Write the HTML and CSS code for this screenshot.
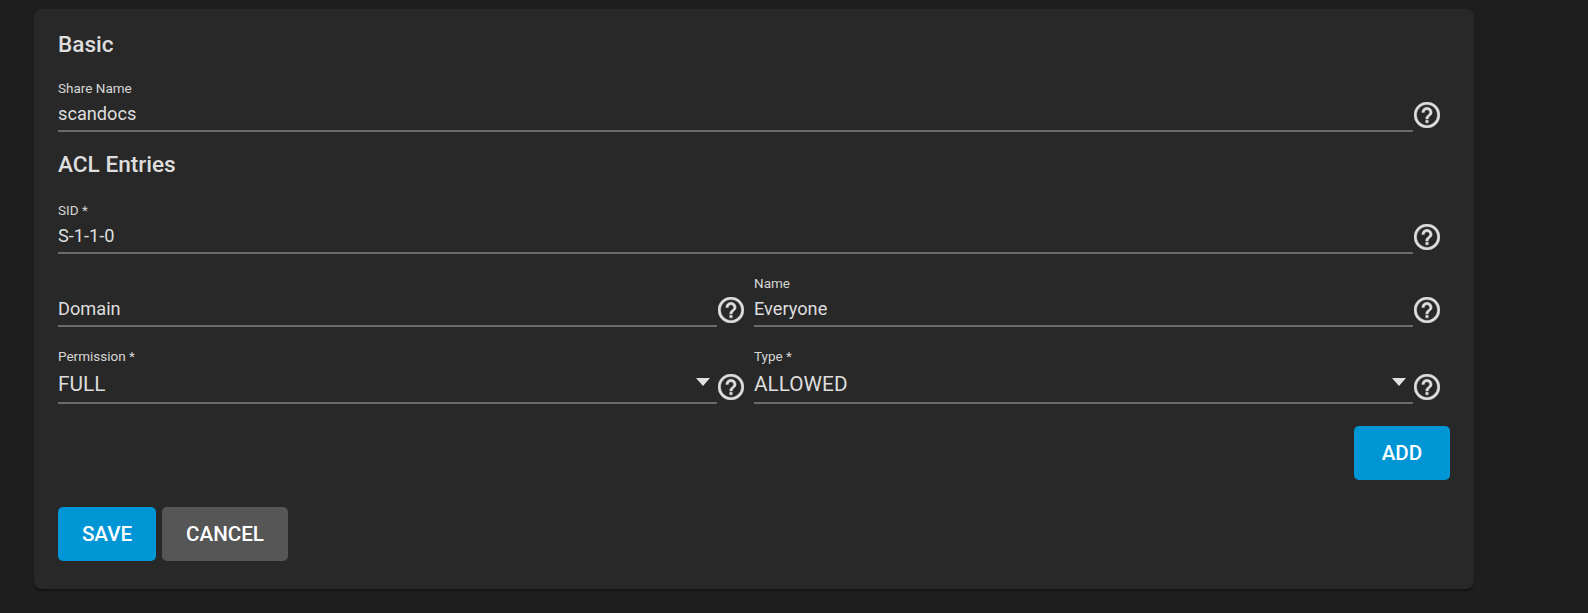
FILE: index.html
```html
<!DOCTYPE html>
<html lang="en">

<head>
    <meta charset="UTF-8">
    <title>Share</title>
    <link rel="stylesheet" href="styles.css">
</head>

<body>
    <svg class="icon-defs" width="0" height="0">
        <symbol id="help" viewBox="2 2 20 20">
            <path d="M11 18h2v-2h-2v2zm1-16C6.48 2 2 6.48 2 12s4.48 10 10 10 10-4.48 10-10S17.52 2 12 2zm0 18c-4.41 0-8-3.59-8-8s3.59-8 8-8 8 3.59 8 8-3.59 8-8 8zm0-14c-2.21 0-4 1.79-4 4h2c0-1.1.9-2 2-2s2 .9 2 2c0 2-3 1.75-3 5h2c0-2.25 3-2.5 3-5 0-2.21-1.79-4-4-4z"/>
        </symbol>
    </svg>

    <form class="card">
        <h3 class="section-title">Basic</h3>

        <div class="cell row-first">
            <div class="field">
                <label class="field-label">Share Name</label>
                <div class="field-value">scandocs</div>
            </div>
            <svg class="help"><use href="#help"></use></svg>
        </div>

        <h3 class="section-title section-acl">ACL Entries</h3>

        <div class="cell row-first">
            <div class="field">
                <label class="field-label">SID *</label>
                <div class="field-value">S-1-1-0</div>
            </div>
            <svg class="help"><use href="#help"></use></svg>
        </div>

        <div class="two-col row-name">
            <div class="cell">
                <div class="field">
                    <div class="field-value">Domain</div>
                </div>
                <svg class="help"><use href="#help"></use></svg>
            </div>
            <div class="cell">
                <div class="field">
                    <label class="field-label">Name</label>
                    <div class="field-value">Everyone</div>
                </div>
                <svg class="help"><use href="#help"></use></svg>
            </div>
        </div>

        <div class="two-col row-select">
            <div class="cell">
                <div class="field field-select">
                    <label class="field-label">Permission *</label>
                    <div class="select-line">
                        <div class="field-value">FULL</div>
                        <span class="caret"></span>
                    </div>
                </div>
                <svg class="help"><use href="#help"></use></svg>
            </div>
            <div class="cell">
                <div class="field field-select">
                    <label class="field-label">Type *</label>
                    <div class="select-line">
                        <div class="field-value">ALLOWED</div>
                        <span class="caret"></span>
                    </div>
                </div>
                <svg class="help"><use href="#help"></use></svg>
            </div>
        </div>

        <div class="add-row">
            <button type="button" class="btn btn-primary btn-add">ADD</button>
        </div>

        <div class="actions">
            <button type="button" class="btn btn-primary btn-save">SAVE</button>
            <button type="button" class="btn btn-cancel">CANCEL</button>
        </div>
    </form>
</body>

</html>
```

FILE: styles.css
```css
body {
    background-color: #1e1e1e;
    color: #dedede;
    font-family: Roboto, "Liberation Sans", sans-serif;
    margin: 0;
    padding: 9px 0 0 34px;
    height: 604px;
    overflow: hidden;
}

.icon-defs {
    display: block;
    height: 0;
}

.card {
    box-sizing: border-box;
    width: 1440px;
    height: 580px;
    padding: 22px 24px 28px;
    background-color: #282828;
    border-radius: 8px;
    box-shadow: 0 2px 2px rgba(0, 0, 0, 0.35);
}

.section-title {
    margin: 0;
    font-size: 22.6px;
    font-weight: 500;
    line-height: 28px;
}

.section-acl {
    margin-top: 19px;
}

.cell {
    display: flex;
    align-items: flex-end;
}

.row-first {
    margin-top: 21px;
}

.section-acl + .row-first {
    margin-top: 23px;
}

.two-col {
    display: grid;
    grid-template-columns: 696px 696px;
}

.row-name {
    margin-top: 21px;
}

.row-select {
    margin-top: 22px;
}

.field {
    box-sizing: border-box;
    flex: 1;
    display: flex;
    flex-direction: column;
    justify-content: flex-end;
    height: 52px;
    padding-bottom: 3px;
    border-bottom: 2px solid #6b6b6b;
}

.field-select {
    height: 55px;
    padding-bottom: 5px;
}

.field-label {
    font-size: 13.5px;
    line-height: 16px;
    color: #d6d6d6;
}

.field-value {
    font-size: 18.2px;
    line-height: 26px;
    margin-top: 5px;
}

.field-select .field-value {
    font-size: 20.8px;
    margin-top: 7px;
}

.select-line {
    display: flex;
    align-items: center;
    justify-content: space-between;
}

.caret {
    width: 0;
    height: 0;
    margin: 3px 7px 0 0;
    border-left: 7.5px solid transparent;
    border-right: 7.5px solid transparent;
    border-top: 8px solid #e0e0e0;
}

.help {
    width: 26px;
    height: 26px;
    flex: none;
    margin: 0 10px 4px 1px;
    fill: #dedede;
    stroke: #dedede;
    stroke-width: 0.3;
    overflow: visible;
}

.add-row {
    display: flex;
    justify-content: flex-end;
    margin-top: 22px;
}

.actions {
    display: flex;
    gap: 6px;
    margin-top: 27px;
}

.btn {
    height: 54px;
    padding: 0;
    border: 0;
    border-radius: 5px;
    color: #fff;
    font-family: inherit;
    font-size: 20.6px;
    font-weight: 500;
}

.btn-primary {
    background-color: #0095d5;
}

.btn-add {
    width: 96px;
}

.btn-save {
    width: 98px;
}

.btn-cancel {
    width: 126px;
    background-color: #565656;
}
```
